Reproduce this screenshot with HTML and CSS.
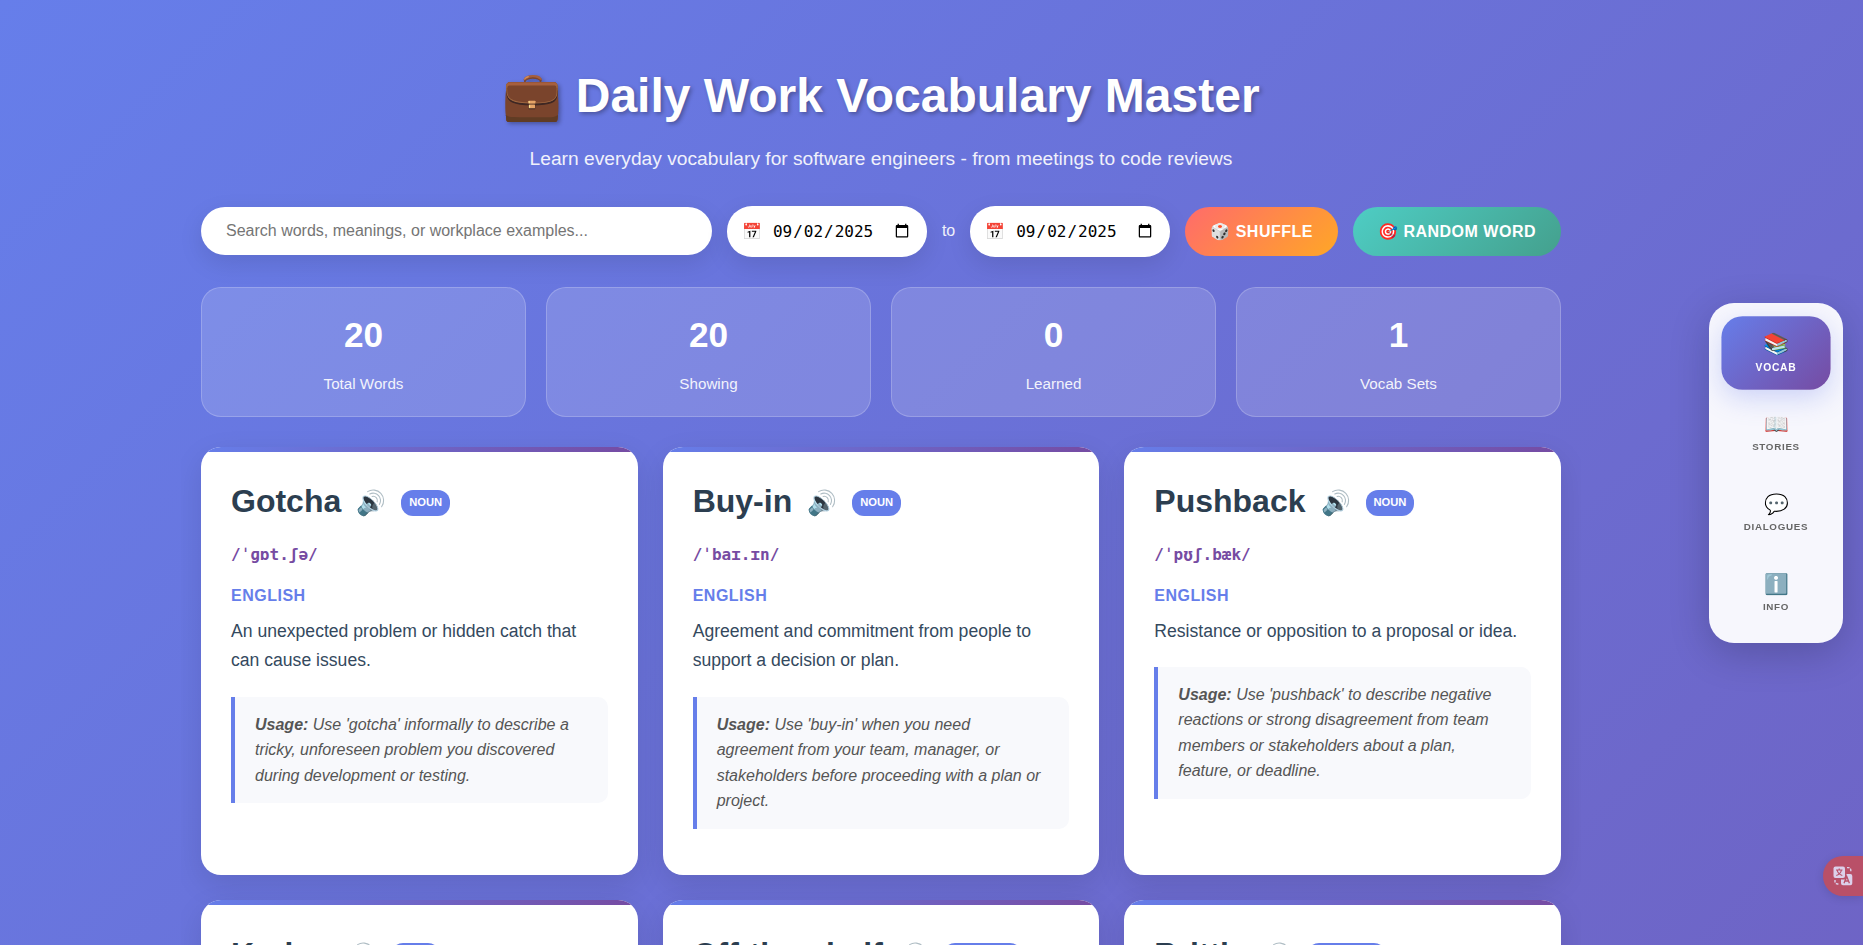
FILE: index.html
```html
<!DOCTYPE html>
<html lang="en">
<head>
<meta charset="utf-8">
<title>Daily Work Vocabulary Master</title>
<link rel="stylesheet" href="styles.css">
</head>
<body>
<div class="container">
  <header class="header">
    <h1>💼 Daily Work Vocabulary Master</h1>
    <p>Learn everyday vocabulary for software engineers - from meetings to code reviews</p>
  </header>

  <div class="controls">
    <input class="search" type="text" placeholder="Search words, meanings, or workplace examples...">
    <label class="date-box"><span class="date-icon">📅</span><input class="date" type="date" value="2025-09-02"></label>
    <span class="to">to</span>
    <label class="date-box"><span class="date-icon">📅</span><input class="date" type="date" value="2025-09-02"></label>
    <button class="btn btn-shuffle">🎲 Shuffle</button>
    <button class="btn btn-random">🎯 Random Word</button>
  </div>

  <section class="stats">
    <div class="stat"><div class="stat-number">20</div><div class="stat-label">Total Words</div></div>
    <div class="stat"><div class="stat-number">20</div><div class="stat-label">Showing</div></div>
    <div class="stat"><div class="stat-number">0</div><div class="stat-label">Learned</div></div>
    <div class="stat"><div class="stat-number">1</div><div class="stat-label">Vocab Sets</div></div>
  </section>

  <main class="grid">
    <article class="card">
      <div class="word-row"><h2>Gotcha</h2><span class="speaker">🔊</span><span class="badge">noun</span></div>
      <div class="phonetic">/ˈɡɒt.ʃə/</div>
      <div class="lang">English</div>
      <p class="meaning">An unexpected problem or hidden catch that can cause issues.</p>
      <div class="usage"><strong>Usage:</strong> Use 'gotcha' informally to describe a tricky, unforeseen problem you discovered during development or testing.</div>
    </article>
    <article class="card">
      <div class="word-row"><h2>Buy-in</h2><span class="speaker">🔊</span><span class="badge">noun</span></div>
      <div class="phonetic">/ˈbaɪ.ɪn/</div>
      <div class="lang">English</div>
      <p class="meaning">Agreement and commitment from people to support a decision or plan.</p>
      <div class="usage"><strong>Usage:</strong> Use 'buy-in' when you need agreement from your team, manager, or stakeholders before proceeding with a plan or project.</div>
    </article>
    <article class="card">
      <div class="word-row"><h2>Pushback</h2><span class="speaker">🔊</span><span class="badge">noun</span></div>
      <div class="phonetic">/ˈpʊʃ.bæk/</div>
      <div class="lang">English</div>
      <p class="meaning">Resistance or opposition to a proposal or idea.</p>
      <div class="usage"><strong>Usage:</strong> Use 'pushback' to describe negative reactions or strong disagreement from team members or stakeholders about a plan, feature, or deadline.</div>
    </article>
    <article class="card">
      <div class="word-row"><h2>Kudos</h2><span class="speaker">🔊</span><span class="badge">noun</span></div>
    </article>
    <article class="card">
      <div class="word-row"><h2>Off-the-shelf</h2><span class="speaker">🔊</span><span class="badge">adjective</span></div>
    </article>
    <article class="card">
      <div class="word-row"><h2>Brittle</h2><span class="speaker">🔊</span><span class="badge">adjective</span></div>
    </article>
  </main>
</div>

<nav class="side-nav">
  <a class="nav-item active"><span class="nav-icon">📚</span><span class="nav-label">Vocab</span></a>
  <a class="nav-item"><span class="nav-icon">📖</span><span class="nav-label">Stories</span></a>
  <a class="nav-item"><span class="nav-icon">💬</span><span class="nav-label">Dialogues</span></a>
  <a class="nav-item"><span class="nav-icon">ℹ️</span><span class="nav-label">Info</span></a>
</nav>

<div class="translate">
  <svg width="20" height="20" viewBox="0 0 20 20" fill="none">
    <rect x="0.5" y="0.5" width="11.5" height="11.5" rx="2" fill="#dcd0ea"/>
    <path d="M3 4h6.5M6.2 2.5V4M8.4 4C8 6.400 5.800 8.600 3.300 9.500M4.100 4C4.600 6.400 6.700 8.600 9.300 9.500" stroke="#b95068" stroke-width="1.200"/>
    <path d="M13.500 8H17.300a2 2 0 0 1 2 2V17.300a2 2 0 0 1-2 2H10a2 2 0 0 1-2-2V13.500H13.500Z" fill="#dcd0ea"/>
    <path d="M11 17.200L13.700 10.300L16.400 17.200M12 15H15.400" stroke="#b95068" stroke-width="1.300"/>
    <path d="M14 1.600H15.200A2.600 2.600 0 0 1 17.800 4.200V5.500M2 14V15.400A2.600 2.600 0 0 0 4.600 18H6" stroke="#dcd0ea" stroke-width="1.400" stroke-dasharray="2.600 1"/>
  </svg>
</div>
</body>
</html>
```

FILE: styles.css
```css
* {
  margin: 0;
  padding: 0;
  box-sizing: border-box;
}

html {
  height: 945px;
  overflow: hidden;
}

body {
  height: 945px;
  overflow: hidden;
  padding-right: 101px;
  font-family: "Liberation Sans", Arial, sans-serif;
  background: linear-gradient(135deg, #667eea 0%, #764ba2 100%) 0 0 / 100% 3700px no-repeat;
}

.container {
  max-width: 1400px;
  height: 945px;
  overflow: hidden;
  margin: 0 auto;
  padding: 20px;
}

.header {
  padding: 49px 0 36px;
  text-align: center;
  color: #fff;
}

.header h1 {
  margin-bottom: 25px;
  font-size: 48px;
  line-height: 54px;
  text-shadow: 2px 2px 4px rgba(0, 0, 0, 0.3);
}

.header p {
  font-size: 19.2px;
  line-height: 22px;
  opacity: 0.9;
}

.controls {
  display: flex;
  align-items: center;
  gap: 15px;
  margin-bottom: 30px;
}

.search {
  flex: 1;
  min-width: 0;
  height: 48px;
  margin-bottom: 1px;
  padding: 15px 25px;
  border: 0;
  border-radius: 25px;
  font-family: inherit;
  font-size: 16px;
  background: #fff;
  box-shadow: 0 8px 25px rgba(0, 0, 0, 0.1);
}

.date-box {
  display: flex;
  align-items: center;
  gap: 8px;
  width: 200px;
  height: 51px;
  padding: 0 15px;
  border-radius: 25px;
  background: #fff;
  box-shadow: 0 8px 25px rgba(0, 0, 0, 0.1);
}

.date-icon {
  font-size: 16px;
}

.date {
  flex: 1;
  min-width: 0;
  padding: 0 0 1px 2px;
  border: 0;
  outline: 0;
  font-family: monospace;
  font-size: 16px;
  background: transparent;
}

.to {
  padding-bottom: 1px;
  font-size: 16px;
  color: #fff;
  opacity: 0.9;
}

.btn {
  height: 49px;
  padding: 0 25px;
  border: 0;
  border-radius: 25px;
  font-family: inherit;
  font-size: 16px;
  font-weight: 700;
  letter-spacing: 0.5px;
  text-transform: uppercase;
  color: #fff;
}

.btn-shuffle {
  background: linear-gradient(135deg, #ff6b6b, #ffa726);
}

.btn-random {
  background: linear-gradient(135deg, #4ecdc4, #44a08d);
}

.stats {
  display: grid;
  grid-template-columns: repeat(4, 1fr);
  gap: 20px;
  margin-bottom: 30px;
}

.stat {
  height: 130px;
  padding: 25px;
  border: 1px solid rgba(255, 255, 255, 0.2);
  border-radius: 20px;
  text-align: center;
  color: #fff;
  background: rgba(255, 255, 255, 0.15);
}

.stat-number {
  margin-bottom: 18px;
  font-size: 35.2px;
  font-weight: 700;
  line-height: 44px;
}

.stat-label {
  font-size: 15.2px;
  line-height: 18px;
  opacity: 0.9;
}

.grid {
  display: grid;
  grid-template-columns: repeat(3, 1fr);
  grid-auto-rows: 428px;
  gap: 25px;
}

.card {
  position: relative;
  overflow: hidden;
  padding: 30px;
  border-radius: 20px;
  background: #fff;
  box-shadow: 0 10px 30px rgba(0, 0, 0, 0.1);
}

.card::before {
  content: "";
  position: absolute;
  top: 0;
  left: 0;
  right: 0;
  height: 5px;
  background: linear-gradient(90deg, #667eea, #764ba2);
}

.word-row {
  display: flex;
  align-items: center;
  height: 51px;
}

.word-row h2 {
  padding-bottom: 2px;
  font-size: 32px;
  line-height: 49px;
  color: #2c3e50;
}

.speaker {
  margin: 0 15px;
  font-size: 24px;
}

.badge {
  height: 26px;
  padding: 0 8px;
  border-radius: 12px;
  font-size: 11.2px;
  font-weight: 700;
  line-height: 25px;
  text-transform: uppercase;
  color: #fff;
  background: #667eea;
}

.phonetic {
  margin-top: 14px;
  font-family: "DejaVu Sans Mono", monospace;
  font-size: 16px;
  font-weight: 700;
  line-height: 26px;
  color: #764ba2;
}

.lang {
  margin-top: 15px;
  font-size: 16px;
  font-weight: 700;
  line-height: 26px;
  letter-spacing: 0.5px;
  text-transform: uppercase;
  color: #667eea;
}

.meaning {
  margin-top: 7.5px;
  font-size: 17.6px;
  line-height: 29.92px;
  color: #34495e;
}

.usage {
  margin-top: 20.2px;
  padding: 15px 20px;
  border-left: 4px solid #667eea;
  border-radius: 0 10px 10px 0;
  font-size: 16px;
  font-style: italic;
  line-height: 25.6px;
  color: #555;
  background: #f8f9fc;
}

.side-nav {
  position: fixed;
  top: 303px;
  right: 20px;
  display: flex;
  flex-direction: column;
  gap: 10px;
  width: 134px;
  height: 340px;
  padding: 15px;
  border-radius: 25px;
  background: rgba(255, 255, 255, 0.95);
  box-shadow: 0 10px 40px rgba(0, 0, 0, 0.2);
}

.nav-item {
  display: flex;
  flex: 1;
  flex-direction: column;
  align-items: center;
  justify-content: center;
  gap: 4px;
  border-radius: 20px;
  color: #666;
}

.nav-item.active {
  color: #fff;
  background: linear-gradient(135deg, #667eea, #764ba2);
  box-shadow: 0 8px 25px rgba(102, 126, 234, 0.3);
  transform: scale(1.05);
}

.nav-icon {
  font-size: 20px;
  line-height: 24px;
}

.nav-label {
  font-size: 9.8px;
  font-weight: 700;
  line-height: 14px;
  letter-spacing: 0.7px;
  text-transform: uppercase;
}

.translate {
  position: fixed;
  top: 856px;
  right: 0;
  display: flex;
  align-items: center;
  width: 40px;
  height: 40px;
  padding-left: 10px;
  border-radius: 20px 0 0 20px;
  background: #b95068;
  box-shadow: 0 2px 10px rgba(0, 0, 0, 0.12);
}
```
